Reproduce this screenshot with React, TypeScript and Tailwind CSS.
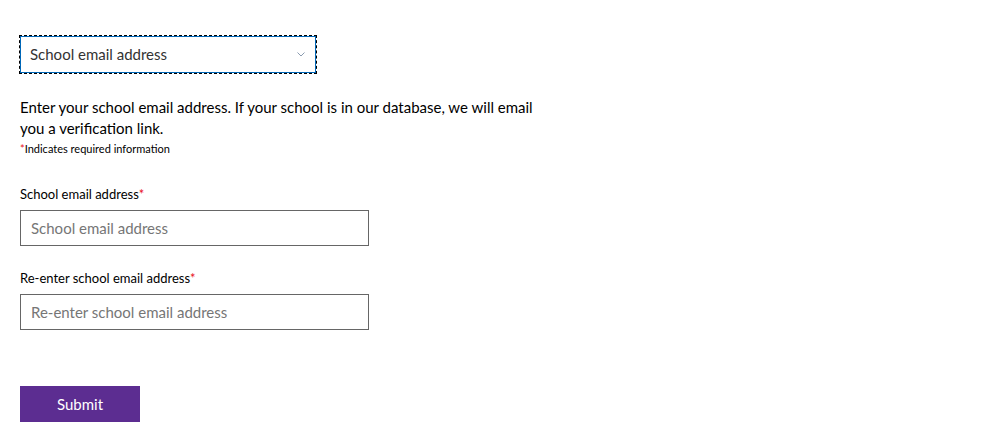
export default function App() {
  return (
    <div className="min-h-[445px] bg-white px-5 pt-[35px] font-['Lato',sans-serif] text-[#000]">
      <div className="-ml-px w-[298px] border border-dashed border-black">
        <div className="flex h-[37px] items-center justify-between border border-[#0067b8] pl-[9px] pr-[10px]">
          <span className="text-[15px] text-[#333]">School email address</span>
          <svg width="8" height="5" viewBox="0 0 8 5" fill="none">
            <path d="M0.5 0.5 L4 4 L7.5 0.5" stroke="#8a9bb0" strokeWidth="1" />
          </svg>
        </div>
      </div>

      <p className="mt-[23px] w-[530px] text-[15px] leading-[21px]">
        Enter your school email address. If your school is in our database, we will email you a
        verification link.
      </p>
      <p className="mt-[3px] text-[11px] leading-[14px]">
        <span className="text-[#e81123]">*</span>Indicates required information
      </p>

      <Field label="School email address" placeholder="School email address" className="mt-[29px]" />
      <Field label="Re-enter school email address" placeholder="Re-enter school email address" className="mt-[23px]" />

      <button className="mt-[56px] h-[36px] w-[120px] bg-[#5c2d91] text-[15px] text-white">Submit</button>
    </div>
  );
}

function Field({ label, placeholder, className }: { label: string; placeholder: string; className?: string }) {
  return (
    <div className={className}>
      <label className="block text-[13px] leading-[18px]">
        {label}
        <span className="text-[#e81123]">*</span>
      </label>
      <input
        className="mt-[7px] h-[36px] w-[349px] border border-[#666] px-[10px] text-[15px] outline-none placeholder:text-[#767676]"
        placeholder={placeholder}
      />
    </div>
  );
}
